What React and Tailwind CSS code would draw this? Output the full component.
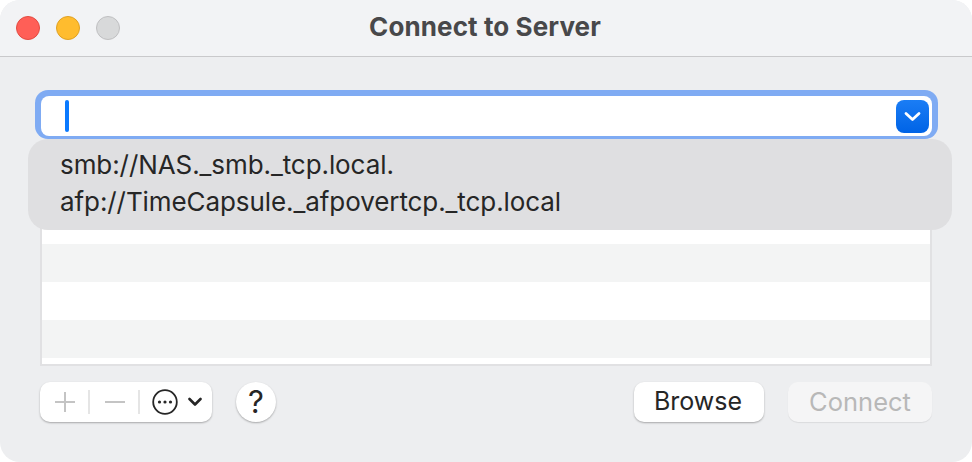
import React from 'react';

const suggestions = ['smb://NAS._smb._tcp.local.', 'afp://TimeCapsule._afpovertcp._tcp.local'];
const rows = ['bg-[#f3f4f4]', 'bg-white', 'bg-[#f3f4f4]', 'bg-white', 'bg-[#f3f4f4]'];

function Light({ className }) {
  return <div className={`w-6 h-6 rounded-full border ${className}`} />;
}

export default function App() {
  return (
    <div className="w-[972px] h-[462px] bg-white font-['Inter','Liberation_Sans',sans-serif] text-[#262626]">
      <div className="w-full h-full rounded-[20px] overflow-hidden bg-[#edeef0] flex flex-col">
        {/* Title bar */}
        <div className="relative h-[57px] shrink-0 bg-[#f2f3f5] border-b border-[#c9c9cb] flex items-center justify-center">
          <div className="absolute left-4 top-4 flex gap-4">
            <Light className="bg-[#ff5f57] border-[#e24b41]" />
            <Light className="bg-[#ffbc2e] border-[#dfa023]" />
            <Light className="bg-[#d8d9da] border-[#bfbfc1]" />
          </div>
          <span className="text-[26px] font-bold text-[#48484a] -mt-[4px] pr-[2px] tracking-[0.1px]">Connect to Server</span>
        </div>

        <div className="flex-1 flex flex-col px-10 pt-[33px]">
          {/* Address field */}
          <div className="relative z-10 -ml-[5px] -mr-[6px] h-[49px] rounded-[13px] bg-[#7fabf3] p-[6px] pb-[3px] shrink-0">
            <div className="h-full bg-white rounded-[8px] flex items-center justify-between pl-[24px] pr-[3px]">
              <div className="w-[4px] h-[32px] rounded-full bg-[#0a7aff]" />
              <div className="w-[33px] h-[33px] rounded-[8px] bg-gradient-to-b from-[#1a7df5] to-[#0063e6] flex items-center justify-center">
                <svg width="17" height="11" viewBox="0 0 17 11" fill="none">
                  <path d="M2 2.5 L8.5 8.5 L15 2.5" stroke="white" strokeWidth="2.8" strokeLinecap="round" strokeLinejoin="round" />
                </svg>
              </div>
            </div>
            {/* Suggestions menu */}
            <div className="absolute left-[-7px] right-[-14px] top-[49px] h-[91px] rounded-[20px] bg-[#dfdfe1] pl-[32px] pt-[7px]">
              {suggestions.map(s => (
                <div key={s} className="h-[37px] leading-[37px] text-[26px] tracking-[-0.08px] text-[#262626]">{s}</div>
              ))}
            </div>
          </div>

          {/* Server list */}
          <div className="mt-[11px] h-[216px] shrink-0 border-2 border-[#e1e1e3] flex flex-col overflow-hidden bg-white">
            <div className="h-[16px] shrink-0 bg-white" />
            {rows.map((r, i) => (
              <div key={i} className={`h-[38px] shrink-0 ${r}`} />
            ))}
          </div>

          {/* Bottom buttons */}
          <div className="mt-[16px] flex items-center">
            <div className="w-[172px] h-[40px] bg-white rounded-[10px] shadow-[0_1px_2px_rgba(0,0,0,0.3)] flex items-center">
              <svg className="ml-[14px]" width="22" height="22" viewBox="0 0 22 22" fill="none">
                <path d="M11 1 V21 M1 11 H21" stroke="#c4c4c4" strokeWidth="2" />
              </svg>
              <div className="ml-[12px] w-[2px] h-[24px] bg-[#e5e5e5]" />
              <svg className="ml-[14px]" width="22" height="4" viewBox="0 0 22 4" fill="none">
                <path d="M1 2 H21" stroke="#c4c4c4" strokeWidth="2" />
              </svg>
              <div className="ml-[12px] w-[2px] h-[24px] bg-[#e5e5e5]" />
              <svg className="ml-[12px]" width="26" height="26" viewBox="0 0 26 26" fill="none">
                <circle cx="13" cy="13" r="11.8" stroke="#262626" strokeWidth="1.8" />
                <circle cx="7.5" cy="13" r="1.6" fill="#262626" />
                <circle cx="13" cy="13" r="1.6" fill="#262626" />
                <circle cx="18.5" cy="13" r="1.6" fill="#262626" />
              </svg>
              <svg className="ml-[10px]" width="14" height="10" viewBox="0 0 14 10" fill="none">
                <path d="M1.5 2 L7 7.5 L12.5 2" stroke="#262626" strokeWidth="2.6" strokeLinecap="round" strokeLinejoin="round" />
              </svg>
            </div>
            <div className="ml-6 w-10 h-10 rounded-full bg-white shadow-[0_1px_2px_rgba(0,0,0,0.3)] flex items-center justify-center text-[31px] font-normal text-[#262626]">?</div>
            <div className="ml-auto w-[130px] h-10 rounded-[10px] bg-white shadow-[0_1px_2px_rgba(0,0,0,0.3)] flex items-center justify-center pr-[2px] text-[25px] text-[#262626]">Browse</div>
            <div className="ml-6 w-[144px] h-10 rounded-[10px] bg-[#f5f5f6] shadow-[0_1px_1px_rgba(0,0,0,0.08)] flex items-center justify-center text-[25.5px] text-[#b8b8b8]">Connect</div>
          </div>
        </div>
      </div>
    </div>
  );
}
